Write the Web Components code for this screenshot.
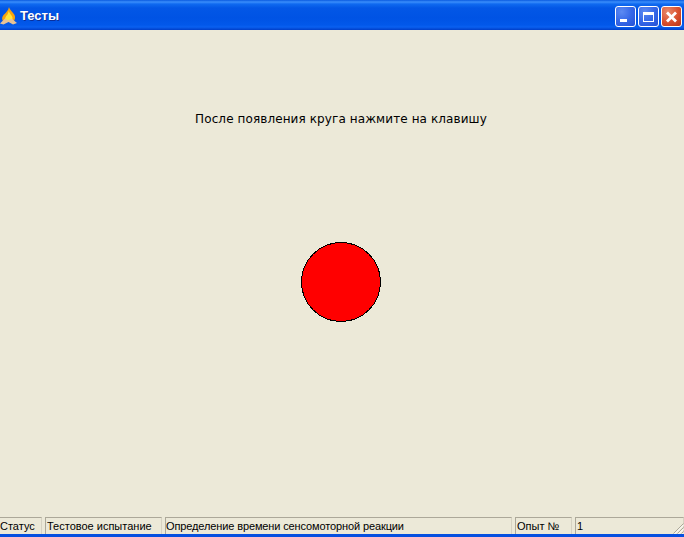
<!DOCTYPE html>
<html lang="ru">
<head>
<meta charset="utf-8">
<title>Тесты</title>
<style>
  html, body { margin: 0; padding: 0; height: 100%; overflow: hidden; background: #ece9d8; }
</style>
</head>
<body>
<xp-window caption="Тесты">
  <reaction-test message="После появления круга нажмите на клавишу"></reaction-test>
  <status-bar slot="status">
    <status-panel style="width:42px">Статус</status-panel>
    <status-panel style="width:117px" inset>Тестовое испытание</status-panel>
    <status-panel style="width:347px;letter-spacing:-.12px;padding-left:0" inset>Определение времени сенсомоторной реакции</status-panel>
    <status-panel style="width:57px" inset>Опыт №</status-panel>
    <status-panel style="flex:1" inset>1</status-panel>
  </status-bar>
</xp-window>

<script>
/**
 * Window frame with the XP title bar.
 */
const windowTemplate = document.createElement('template')
windowTemplate.innerHTML = `
  <style>
    :host {
      display: flex;
      flex-direction: column;
      width: 684px;
      height: 537px;
      background: #ece9d8;
    }
    #titlebar {
      flex: none;
      height: 30px;
      display: flex;
      align-items: center;
      box-sizing: border-box;
      padding: 0 2px 0 0;
      background: linear-gradient(to bottom, #0a5be0 0, #3a8efb 2px, #0f6af0 4px, #0357e6 8px, #0053e4 18px, #0258ea 25px, #0a60f0 27px, #003ec8 30px);
    }
    #icon { flex: none; width: 17px; height: 18px; margin: 2px 3px 0 0; }
    #caption {
      flex: 1;
      color: #fff;
      font: bold 13px "Liberation Sans", Arial, sans-serif;
      text-shadow: 1px 1px 0 #0a2f9c;
    }
    #buttons { display: flex; gap: 2px; margin-top: 3px; }
    #buttons button {
      width: 21px;
      height: 21px;
      padding: 0;
      display: block;
      border: 1px solid #fff;
      border-radius: 3px;
      background: radial-gradient(circle at 30% 25%, #5c8af2 0, #3668e8 50%, #2450d4 100%);
    }
    #buttons button.close {
      background: radial-gradient(circle at 30% 25%, #e88a6c 0, #d9502f 55%, #b93418 100%);
    }
    button svg { display: block; width: 19px; height: 19px; }
    #body { flex: 1; min-height: 0; display: flex; flex-direction: column; }
    #bottom { flex: none; height: 3px; background: #0550e0; }
  </style>
  <div id="titlebar">
    <svg id="icon" viewBox="0 0 17 18">
      <path d="M9 0 C9.500 3 13 5 14.500 8 C15.500 10 15 12 14 14 L3 14 C1.500 12 2 10 3.500 8 C5.500 6 8.500 3.500 9 0 Z" fill="#f7a20e"/>
      <path d="M8.800 4 C9.500 7 13 9 12.500 11.500 L12 14 L5 14 C4.500 12 5.500 9.500 7.500 7.500 Z" fill="#ffe53c"/>
      <path d="M0 16.500 L5 11.500 L8 13.500 L11.500 11.500 L17 16 L13 17.500 L8.500 15 L3.500 17.500 Z" fill="#e6c296"/>
    </svg>
    <span id="caption"></span>
    <div id="buttons">
      <button aria-label="Свернуть"><svg viewBox="0 0 19 19"><rect x="4" y="12" width="7" height="3" fill="#fff"/></svg></button>
      <button aria-label="Развернуть"><svg viewBox="0 0 19 19"><rect x="4.500" y="5.500" width="10" height="9" fill="none" stroke="#fff"/><rect x="4" y="5" width="11" height="3" fill="#fff"/></svg></button>
      <button class="close" aria-label="Закрыть"><svg viewBox="0 0 19 19"><path d="M5 5.500L14 14.500M14 5.500L5 14.500" stroke="#fff" stroke-width="2.800" fill="none"/></svg></button>
    </div>
  </div>
  <div id="body">
    <slot></slot>
    <slot name="status"></slot>
  </div>
  <div id="bottom"></div>
`

customElements.define('xp-window',
  class extends HTMLElement {
    constructor () {
      super()
      this.attachShadow({ mode: 'open' })
        .appendChild(windowTemplate.content.cloneNode(true))
    }

    connectedCallback () {
      this.shadowRoot.querySelector('#caption').textContent = this.getAttribute('caption')
    }
  }
)

/**
 * The test area: instruction text and the red circle.
 */
const reactionTemplate = document.createElement('template')
reactionTemplate.innerHTML = `
  <style>
    :host {
      flex: 1;
      min-height: 0;
      display: flex;
      flex-direction: column;
      align-items: center;
      color: #000;
    }
    #message {
      margin-top: 81px;
      margin-right: 2px;
      white-space: nowrap;
      letter-spacing: .1px;
      font: 12px/16px "DejaVu Sans", Verdana, sans-serif;
    }
    #circle {
      display: block;
      margin-top: 115px;
      margin-right: 2px;
    }
  </style>
  <div id="message"></div>
  <svg id="circle" width="80" height="80" viewBox="0 0 80 80">
    <circle cx="40" cy="40" r="39.500" fill="#ff0000" stroke="#000" shape-rendering="crispEdges"/>
  </svg>
`

customElements.define('reaction-test',
  class extends HTMLElement {
    constructor () {
      super()
      this.attachShadow({ mode: 'open' })
        .appendChild(reactionTemplate.content.cloneNode(true))
    }

    connectedCallback () {
      this.shadowRoot.querySelector('#message').textContent = this.getAttribute('message')
    }
  }
)

/**
 * Status bar, holds the panels and the size grip.
 */
const statusTemplate = document.createElement('template')
statusTemplate.innerHTML = `
  <style>
    :host {
      flex: none;
      height: 17px;
      display: flex;
      gap: 3px;
      position: relative;
    }
    svg { position: absolute; right: 0; bottom: 0; }
  </style>
  <slot></slot>
  <svg width="12" height="12" viewBox="0 0 12 12">
    <path d="M11.500 1.500L1.500 11.500M11.500 5.500L5.500 11.500M11.500 9.500L9.500 11.500" stroke="#aca899" fill="none"/>
    <path d="M12 2.500L2.500 12M12 6.500L6.500 12M12 10.500L10.500 12" stroke="#fff" fill="none"/>
  </svg>
`

customElements.define('status-bar',
  class extends HTMLElement {
    constructor () {
      super()
      this.attachShadow({ mode: 'open' })
        .appendChild(statusTemplate.content.cloneNode(true))
    }
  }
)

const panelTemplate = document.createElement('template')
panelTemplate.innerHTML = `
  <style>
    :host {
      display: block;
      box-sizing: border-box;
      height: 17px;
      border-top: 1px solid #aca899;
      border-right: 1px solid #d6d2c2;
      font: 11px/16px "Liberation Sans", Arial, sans-serif;
      color: #000;
      white-space: nowrap;
      overflow: hidden;
    }
    :host([inset]) {
      border-left: 1px solid #aca899;
      padding-left: 1px;
    }
  </style>
  <slot></slot>
`

customElements.define('status-panel',
  class extends HTMLElement {
    constructor () {
      super()
      this.attachShadow({ mode: 'open' })
        .appendChild(panelTemplate.content.cloneNode(true))
    }
  }
)
</script>
</body>
</html>
